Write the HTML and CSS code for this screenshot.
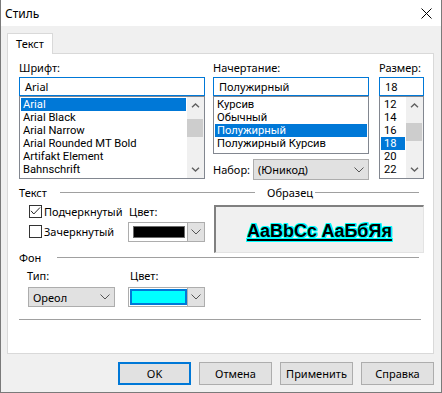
FILE: index.html
```html
<!DOCTYPE html>
<html>
<head>
<meta charset="utf-8">
<link rel="stylesheet" href="styles.css">
</head>
<body>
<div class="window">
  <div class="titlebar">
    <span class="title">Стиль</span>
    <svg class="close" width="11" height="11" viewBox="0 0 11 11"><path d="M0.5 0.5L10.5 10.5M10.5 0.5L0.5 10.5" stroke="#000" stroke-width="1"/></svg>
  </div>
  <div class="body">
    <div class="tabs"><div class="tab">Текст</div></div>
    <div class="panel">
      <div class="top">
        <div class="col col-font">
          <div class="lbl">Шрифт:</div>
          <div class="edit">Arial</div>
          <div class="list list-font">
            <div class="items">
              <div class="item sel">Arial</div>
              <div class="item">Arial Black</div>
              <div class="item">Arial Narrow</div>
              <div class="item">Arial Rounded MT Bold</div>
              <div class="item">Artifakt Element</div>
              <div class="item">Bahnschrift</div>
            </div>
            <div class="vscroll">
              <div class="sbtn"><svg width="9" height="5" viewBox="0 0 9 5"><path d="M1 4.3L4.5 1L8 4.3" fill="none" stroke="#606060" stroke-width="1.4"/></svg></div>
              <div class="track"><div class="thumb thumb-font"></div></div>
              <div class="sbtn"><svg width="9" height="5" viewBox="0 0 9 5"><path d="M1 0.7L4.5 4L8 0.7" fill="none" stroke="#606060" stroke-width="1.4"/></svg></div>
            </div>
          </div>
        </div>
        <div class="col col-style">
          <div class="lbl">Начертание:</div>
          <div class="edit">Полужирный</div>
          <div class="list list-style">
            <div class="items">
              <div class="item">Курсив</div>
              <div class="item">Обычный</div>
              <div class="item sel">Полужирный</div>
              <div class="item">Полужирный Курсив</div>
            </div>
          </div>
          <div class="charset">
            <span class="charset-lbl">Набор:</span>
            <div class="combo combo-charset">
              <span class="combo-text">(Юникод)</span>
              <svg class="chev" width="10" height="6" viewBox="0 0 10 6"><path d="M0.5 0.5L5 5L9.5 0.5" fill="none" stroke="#555" stroke-width="1"/></svg>
            </div>
          </div>
        </div>
        <div class="col col-size">
          <div class="lbl">Размер:</div>
          <div class="edit">18</div>
          <div class="list list-size">
            <div class="items">
              <div class="item">12</div>
              <div class="item">14</div>
              <div class="item">16</div>
              <div class="item sel">18</div>
              <div class="item">20</div>
              <div class="item">22</div>
            </div>
            <div class="vscroll">
              <div class="sbtn"><svg width="9" height="5" viewBox="0 0 9 5"><path d="M1 4.3L4.5 1L8 4.3" fill="none" stroke="#606060" stroke-width="1.4"/></svg></div>
              <div class="track"><div class="thumb thumb-size"></div></div>
              <div class="sbtn"><svg width="9" height="5" viewBox="0 0 9 5"><path d="M1 0.7L4.5 4L8 0.7" fill="none" stroke="#606060" stroke-width="1.4"/></svg></div>
            </div>
          </div>
        </div>
      </div>

      <div class="hdr hdr-text">
        <span class="hdr-lbl hdr-lbl-text">Текст</span>
        <span class="hline grow"></span>
        <span class="hdr-lbl hdr-lbl-sample">Образец</span>
        <span class="hline hline-sample"></span>
      </div>

      <div class="mid">
        <div class="checks">
          <div class="chk-row">
            <span class="chk"><svg width="11" height="11" viewBox="0 0 11 11"><path d="M1 4.8L3.8 8L10 1.5" fill="none" stroke="#222" stroke-width="1"/></svg></span>
            <span class="chk-lbl">Подчеркнутый</span>
          </div>
          <div class="chk-row">
            <span class="chk"></span>
            <span class="chk-lbl">Зачеркнутый</span>
          </div>
        </div>
        <div class="ccol">
          <div class="ccol-lbl">Цвет:</div>
          <div class="cc">
            <div class="sw-wrap sw-wrap-black"><div class="sw sw-black"></div></div>
            <div class="cc-btn"><svg width="10" height="6" viewBox="0 0 10 6"><path d="M0.5 0.5L5 5L9.5 0.5" fill="none" stroke="#555" stroke-width="1"/></svg></div>
          </div>
        </div>
        <div class="sample"><span class="sample-text">AaBbCc AaБбЯя</span></div>
      </div>

      <div class="hdr hdr-bg">
        <span class="hdr-lbl hdr-lbl-bg">Фон</span>
        <span class="hline grow"></span>
      </div>

      <div class="bgrow">
        <div class="tcol">
          <div class="tlbl">Тип:</div>
          <div class="combo combo-type">
            <span class="combo-text">Ореол</span>
            <svg class="chev" width="10" height="6" viewBox="0 0 10 6"><path d="M0.5 0.5L5 5L9.5 0.5" fill="none" stroke="#555" stroke-width="1"/></svg>
          </div>
        </div>
        <div class="ccol ccol-bg">
          <div class="tlbl tlbl-color">Цвет:</div>
          <div class="cc">
            <div class="sw-wrap sw-wrap-cyan"><div class="sw sw-cyan"></div></div>
            <div class="cc-btn"><svg width="10" height="6" viewBox="0 0 10 6"><path d="M0.5 0.5L5 5L9.5 0.5" fill="none" stroke="#555" stroke-width="1"/></svg></div>
          </div>
        </div>
      </div>

      <div class="sep"></div>
    </div>

    <div class="buttons">
      <div class="btn btn-default">OK</div>
      <div class="btn">Отмена</div>
      <div class="btn">Применить</div>
      <div class="btn">Справка</div>
    </div>
  </div>
</div>
</body>
</html>
```

FILE: styles.css
```css
* { box-sizing: border-box; }
html, body { margin: 0; padding: 0; background: #fff; }
body {
  font-family: "Noto Sans", "DejaVu Sans", sans-serif;
  font-size: 11px;
  color: #000;
}
.window {
  width: 442px;
  height: 393px;
  border: 1px solid #7a7a7a;
  border-top: none;
  background: #f0f0f0;
  display: flex;
  flex-direction: column;
  overflow: hidden;
}
.titlebar {
  height: 26px;
  background: #fff;
  display: flex;
  align-items: center;
  justify-content: space-between;
  padding: 0 9px 0 4px;
  flex-shrink: 0;
}
.title { font-size: 12px; line-height: 16px; margin-top: 1px; }
.close { display: block; margin-top: 1px; }
.body {
  flex: 1;
  padding: 7px 0 0 6px;
}
.tabs { display: flex; height: 20px; }
.tab {
  width: 46px;
  height: 21px;
  border: 1px solid #d9d9d9;
  border-bottom: none;
  background: #fff;
  padding-left: 8px;
  line-height: 19px;
  position: relative;
  z-index: 1;
}
.panel {
  width: 427px;
  height: 301px;
  border: 1px solid #d9d9d9;
  background: #fff;
  padding: 6px 0 0 11px;
}
.top { display: flex; align-items: flex-start; }
.col { display: flex; flex-direction: column; }
.col-font { width: 186px; }
.col-style { width: 156px; margin-left: 8px; }
.col-size { width: 45px; margin-left: 10px; }
.lbl { height: 15px; line-height: 15px; margin-bottom: 2px; }
.edit {
  height: 19px;
  border: 1px solid #0078d7;
  padding-left: 5px;
  line-height: 17px;
  background: #fff;
}
.list {
  border: 1px solid #828790;
  display: flex;
  background: #fff;
}
.list-font, .list-size { height: 83px; }
.list-style { height: 58px; }
.items { flex: 1; padding: 1px; overflow: hidden; }
.item {
  height: 13px;
  line-height: 13px;
  padding-left: 2px;
  white-space: nowrap;
  font-family: Roboto, "Noto Sans", sans-serif;
  font-size: 11.2px;
  overflow: hidden;
}
.list-size .item { padding-left: 3px; }
.item.sel { background: #0078d7; color: #fff; }
.vscroll {
  width: 17px;
  background: #f0f0f0;
  display: flex;
  flex-direction: column;
}
.sbtn {
  height: 17px;
  display: flex;
  align-items: center;
  justify-content: center;
}
.sbtn svg { display: block; }
.track { flex: 1; }
.thumb { background: #cdcdcd; margin: 0 1px 0 0; }
.thumb-font { margin-top: 5px; height: 18px; }
.thumb-size { margin-top: 9px; height: 18px; }
.charset {
  margin-top: 5px;
  height: 21px;
  display: flex;
  align-items: center;
}
.charset-lbl { width: 40px; }
.combo {
  height: 21px;
  border: 1px solid #adadad;
  background: #e1e1e1;
  display: flex;
  align-items: center;
  justify-content: space-between;
  padding: 0 4px 0 4px;
}
.combo-charset { width: 116px; }
.combo-text { line-height: 17px; }
.chev { display: block; }

.hdr {
  display: flex;
  align-items: center;
  width: 400px;
  height: 15px;
  line-height: 15px;
}
.hdr-text { margin-top: 5px; }
.hdr-lbl-text { width: 41px; }
.hline { height: 1px; background: #a0a0a0; }
.grow { flex: 1; }
.hdr-lbl-sample { padding: 0 2px 0 12px; }
.hline-sample { width: 104px; }

.mid { display: flex; margin-top: 1px; height: 52px; }
.checks { margin-left: 10px; width: 99px; }
.chk-row { height: 20px; display: flex; align-items: center; }
.chk {
  width: 13px;
  height: 13px;
  border: 1px solid #333;
  background: #fff;
  display: block;
}
.chk svg { display: block; }
.chk-lbl { margin-left: 2px; line-height: 15px; }
.ccol { width: 77px; }
.ccol-lbl { height: 21px; line-height: 21px; padding-left: 1px; }
.cc {
  width: 77px;
  height: 20px;
  border: 1px solid #adadad;
  background: #fff;
  display: flex;
}
.sw-wrap { flex: 1; }
.sw-wrap-black { padding: 3px 2px 3px 4px; }
.sw-wrap-cyan { padding: 1px 0 1px 1px; }
.sw { width: 100%; height: 100%; }
.sw-black { background: #000; border: 1px solid #6b6b6b; }
.sw-cyan { background: #00ffff; border: 2px solid #0078d7; }
.cc-btn {
  width: 17px;
  background: #e1e1e1;
  border-left: 1px solid #adadad;
  display: flex;
  align-items: center;
  justify-content: center;
}
.cc-btn svg { display: block; }
.sample {
  margin-left: 9px;
  margin-top: 4px;
  width: 210px;
  height: 48px;
  background: #f0f0f0;
  border-top: 2px solid #808080;
  border-left: 2px solid #808080;
  border-right: 1px solid #e3e3e3;
  border-bottom: 1px solid #e3e3e3;
  display: flex;
  align-items: center;
  justify-content: center;
  padding-top: 4px;
}
.sample-text {
  font-family: "Liberation Sans", Arial, sans-serif;
  font-weight: bold;
  font-size: 18px;
  text-decoration: underline;
  text-decoration-thickness: 2px;
  text-underline-offset: 2px;
  white-space: nowrap;
  text-shadow: 1px 0 #00ffff, -1px 0 #00ffff, 0 1px #00ffff, 0 -1px #00ffff,
    1px 1px #00ffff, -1px -1px #00ffff, 1px -1px #00ffff, -1px 1px #00ffff;
}

.hdr-bg { margin-top: -3px; }
.hdr-lbl-bg { width: 38px; }

.bgrow { display: flex; height: 42px; }
.tcol { margin-left: 9px; width: 87px; }
.tlbl { padding-top: 3px; line-height: 16px; height: 22px; margin-left: -1px; }
.tlbl-color { margin-left: 2px; }
.combo-type { width: 87px; height: 20px; }
.ccol-bg { margin-left: 13px; }

.sep { margin-top: 12px; width: 402px; height: 1px; background: #a0a0a0; }

.buttons {
  width: 427px;
  margin-top: 8px;
  display: flex;
  justify-content: flex-end;
  gap: 8px;
}
.btn {
  width: 73px;
  height: 23px;
  border: 1px solid #adadad;
  background: #e1e1e1;
  display: flex;
  align-items: center;
  justify-content: center;
  line-height: 15px;
}
.btn-default { border: 2px solid #0078d7; }
```
